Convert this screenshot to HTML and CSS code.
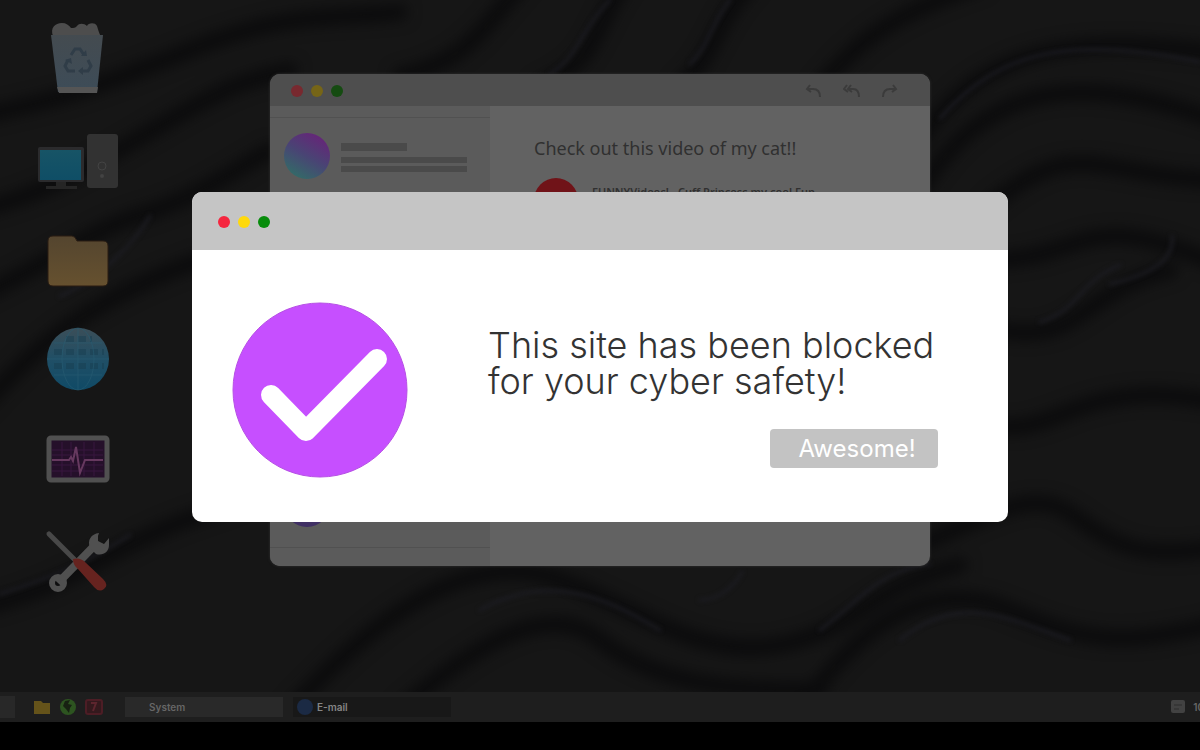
FILE: index.html
```html
<!DOCTYPE html>
<html lang="en">
<head>
  <meta charset="UTF-8">
  <meta name="viewport" content="width=device-width, initial-scale=1.0">
  <title>Site blocked</title>
  <link rel="stylesheet" href="styles.css">
</head>
<body>
  <main class="desktop">
    <svg class="wallpaper" viewBox="0 0 1200 692" preserveAspectRatio="none" aria-hidden="true">
      <defs>
        <filter id="soft" x="-5%" y="-5%" width="110%" height="110%" color-interpolation-filters="sRGB"><feGaussianBlur stdDeviation="7"/></filter>
        <filter id="thin" color-interpolation-filters="sRGB"><feGaussianBlur stdDeviation="2"/></filter>
      </defs>
      <g fill="none" stroke="#0b0b0c" stroke-width="16" stroke-linecap="round" filter="url(#soft)">
        <path d="M-30 118C60 100 90 90 190 50S330 20 400 12"/>
        <path d="M-30 212C50 195 100 160 170 120S250 80 290 70"/>
        <path d="M-30 300C40 270 90 230 140 215S220 180 270 150"/>
        <path d="M-30 420C40 340 90 300 200 260"/>
        <path d="M-30 610C70 590 110 545 200 515S270 480 300 470"/>
        <path d="M400 76C470 60 480 30 530 -25"/>
        <path d="M540 86C600 60 590 30 630 -25"/>
        <path d="M680 86C720 50 710 25 760 -25"/>
        <path d="M820 86C860 40 890 15 980 -15"/>
        <path d="M920 140C980 50 1070 30 1230 55"/>
        <path d="M920 190C990 80 1080 70 1230 125"/>
        <path d="M990 205C1080 130 1100 180 1230 180"/>
        <path d="M990 260C1090 260 1080 200 1230 270"/>
        <path d="M990 328C1080 350 1080 290 1170 270"/>
        <path d="M990 425C1060 440 1080 370 1230 405"/>
        <path d="M920 545C1020 500 1040 490 1080 520S1150 560 1230 545"/>
        <path d="M290 710C390 600 480 550 560 580S700 660 780 645S860 590 960 565"/>
        <path d="M400 710C480 640 550 600 600 640S720 692 820 690"/>
        <path d="M800 710C870 610 940 580 1010 610S1120 650 1230 620"/>
      </g>
      <g fill="none" stroke="#1c1c22" stroke-width="3" stroke-linecap="round" filter="url(#thin)">
        <path d="M60 296C90 285 130 250 150 216"/>
        <path d="M0 594C60 575 90 560 130 535"/>
        <path d="M550 74C580 55 580 30 610 0"/>
        <path d="M690 64C710 45 710 25 730 0"/>
        <path d="M940 118C1000 50 1070 35 1200 62"/>
        <path d="M1110 284C1150 275 1175 260 1172 236"/>
        <path d="M1040 322C1080 310 1080 280 1120 265"/>
        <path d="M700 600C720 600 735 585 742 572"/>
        <path d="M820 630C860 600 880 570 930 564"/>
        <path d="M480 610C550 570 610 600 660 630"/>
        <path d="M900 640C960 590 1010 620 1070 640"/>
      </g>
    </svg>

    <nav class="shortcuts" aria-label="Desktop">
      <a href="#" aria-label="Recycle bin">
        <svg viewBox="0 0 84 80">
          <defs>
            <linearGradient id="bin" x2="0" y2="1"><stop stop-color="#444b50"/><stop offset="1" stop-color="#3d4c58"/></linearGradient>
          </defs>
          <path d="M16 16c-3-8 2-13 9-13 4 0 7 2 9 5 3 0 4 0 6-2 2-3 7-3 10 0 1-3 8-4 10 0 1 3 2 7 4 11z" fill="#4d4d4d"/>
          <path d="M14 15h52l-6 57H21z" fill="url(#bin)"/>
          <path d="M20 67h41l-1 6H22z" fill="#555"/>
          <g fill="none" stroke="#303d48" stroke-width="3">
            <path d="M34 35l4-6h5l4 6M51 40l3 6-3 5h-6M38 51h-7l-3-5 3-6"/>
          </g>
          <path d="M44 36h6l-1-6zM46 47v8l-5-4zM28 40l6-2 1 6z" fill="#303d48"/>
        </svg>
      </a>
      <a href="#" aria-label="Computer">
        <svg viewBox="0 0 84 80">
          <defs><linearGradient id="screen" x2="0" y2="1"><stop stop-color="#175466"/><stop offset="1" stop-color="#0f4e66"/></linearGradient></defs>
          <rect x="50" y="14" width="31" height="54" rx="3" fill="#323232"/>
          <circle cx="65" cy="46" r="4" fill="none" stroke="#434343"/>
          <circle cx="65" cy="56" r="2" fill="#434343"/>
          <rect x="1" y="27" width="46" height="35" rx="2" fill="#2b2b2d"/>
          <rect x="3" y="30" width="41" height="30" fill="url(#screen)"/>
          <path d="M19 62h10v4h11v3H9v-3h10z" fill="#252525"/>
        </svg>
      </a>
      <a href="#" aria-label="Files">
        <svg viewBox="0 0 84 80">
          <defs><linearGradient id="folder" x2="0" y2="1"><stop stop-color="#54452f"/><stop offset="1" stop-color="#66512f"/></linearGradient></defs>
          <path d="M11 21q0-5 5-5h19q3 0 5 5h26q5 0 5 5v35q0 5-5 5H16q-5 0-5-5z" fill="url(#folder)" stroke="#2a1d13"/>
        </svg>
      </a>
      <a href="#" aria-label="Browser">
        <svg viewBox="0 0 84 80">
          <defs><linearGradient id="globe" x2="0" y2="1"><stop stop-color="#3b4e58"/><stop offset=".5" stop-color="#204f66"/><stop offset="1" stop-color="#104a66"/></linearGradient></defs>
          <circle cx="41" cy="39" r="31" fill="url(#globe)"/>
          <g fill="none" stroke="#173e50" stroke-width="6" stroke-dasharray="8 4">
            <path d="M29 19h26M17 32h50M17 46h50" opacity=".5"/>
          </g>
          <g fill="none" stroke="#285d73" stroke-width="1" opacity=".6">
            <path d="M41 8v62M10 39h62M17 23h48M17 55h48"/>
            <ellipse cx="41" cy="39" rx="16" ry="31"/>
          </g>
        </svg>
      </a>
      <a href="#" aria-label="System monitor">
        <svg viewBox="0 0 84 80">
          <rect x="12" y="18" width="58" height="42" rx="2" fill="#25102a" stroke="#505050" stroke-width="5"/>
          <path d="M15 30h51M15 35h51M15 45h51M15 51h51M25 22v34M34 22v34M47 22v34M57 22v34" stroke="#39173e"/>
          <path d="M15 40h17l2-3 2 4 3-14 4 26 5-13h18" fill="none" stroke="#66395f" stroke-width="2"/>
        </svg>
      </a>
      <a href="#" aria-label="Tools">
        <svg viewBox="0 0 84 80">
          <path d="M21 63L61 22" stroke="#505050" stroke-width="8"/>
          <circle cx="21" cy="63" r="6" fill="none" stroke="#505050" stroke-width="6"/>
          <path d="M62 13c-8 1-12 7-9 15l6 6c7 2 13-2 13-9v-7l-5 6-6-3v-5z" fill="#505050"/>
          <path d="M12 14l26 26" stroke="#484848" stroke-width="5" stroke-linecap="round"/>
          <path d="M36 39q7-2 12 3l18 17q6 6 1 10-5 4-10-2L41 49q-5-4-5-10z" fill="#66231f"/>
        </svg>
      </a>
    </nav>

    <section class="window mail" aria-label="E-mail">
      <header class="mail-bar">
        <span class="lights"><i class="red"></i><i class="yellow"></i><i class="green"></i></span>
        <span class="mail-tools">
          <button aria-label="Reply"><svg viewBox="0 0 18 14"><path d="M5 1L2 5l4 3M2 5h6q7 0 7 8"/></svg></button>
          <button aria-label="Reply all"><svg viewBox="0 0 18 14"><path d="M4 1L1 5l4 3M8 1L5 5l4 3M5 5h5q6 0 6 8"/></svg></button>
          <button aria-label="Forward"><svg viewBox="0 0 18 14"><path d="M12 1l3 4-4 3M15 5H9q-7 0-7 8"/></svg></button>
        </span>
      </header>
      <div class="mail-body">
        <aside class="inbox">
          <div class="inbox-row">
            <span class="avatar"></span>
            <span class="lines"><i class="short"></i><i></i><i></i></span>
          </div>
          <div class="inbox-row last"><span class="avatar"></span></div>
        </aside>
        <article class="message">
          <h2>Check out this video of my cat!!</h2>
          <div class="sender">
            <span class="sender-photo"></span>
            <p>FUNNYVideos! - Cuff Princess my cool Fun</p>
          </div>
        </article>
      </div>
    </section>

    <section class="window dialog" role="dialog" aria-labelledby="blocked">
      <header class="dialog-bar">
        <span class="lights bright"><i class="red"></i><i class="yellow"></i><i class="green"></i></span>
      </header>
      <div class="dialog-body">
        <svg class="check" viewBox="0 0 176 176" aria-hidden="true">
          <circle cx="88" cy="88" r="87" fill="#c64fff" stroke="#b650e5"/>
          <path d="M39 93l35 36 71-72" fill="none" stroke="#fff" stroke-width="20" stroke-linecap="round" stroke-linejoin="round"/>
        </svg>
        <div class="notice">
          <h1 id="blocked">This site has been blocked<br>for your cyber safety!</h1>
          <button class="confirm">Awesome!</button>
        </div>
      </div>
    </section>
  </main>

  <footer class="taskbar">
    <button class="menu" aria-label="Menu"></button>
    <div class="launchers">
      <button aria-label="Files"><svg viewBox="0 0 18 18"><path d="M1 3h7l2 2h7v11H1z" fill="#65531a"/></svg></button>
      <button aria-label="Web"><svg viewBox="0 0 18 18"><circle cx="9" cy="9" r="8" fill="#2d5420"/><path d="M6 3l5-1-2 4 4 1-2 3-1 5-3-4-3-3z" fill="#172112"/></svg></button>
      <button aria-label="Terminal"><svg viewBox="0 0 18 18"><rect x="1" y="2" width="16" height="14" rx="2" fill="#34191d" stroke="#4d1d25" stroke-width="2"/><path d="M6 5h5l-3 8" fill="none" stroke="#5d252e" stroke-width="2"/></svg></button>
    </div>
    <button class="task">System</button>
    <button class="task current"><span class="task-icon"></span>E-mail</button>
    <div class="tray">
      <svg viewBox="0 0 14 14" aria-hidden="true"><rect width="14" height="13" rx="2" fill="#424242"/><path d="M3 5h8M3 9h5" stroke="#2c2c2c"/></svg>
      <time>10</time>
    </div>
  </footer>
</body>
</html>
```
FILE: styles.css
```css
* {
  box-sizing: border-box;
}
body {
  margin: 0;
  min-height: 100vh;
  padding-bottom: 28px;
  display: flex;
  flex-direction: column;
  background: #000;
  font-family: Inter, "Liberation Sans", sans-serif;
  overflow: hidden;
}
h1, h2, p {
  margin: 0;
  font-weight: 400;
}
button {
  border: 0;
  padding: 0;
  background: none;
  font-family: inherit;
  color: inherit;
  cursor: pointer;
}
svg {
  display: block;
}
.desktop {
  position: relative;
  flex: 1;
  background: #161616;
  overflow: hidden;
}
.wallpaper {
  position: absolute;
  inset: 0;
  width: 100%;
  height: 100%;
}
.shortcuts {
  position: relative;
  display: flex;
  flex-direction: column;
  gap: 20px;
  width: 84px;
  margin-left: 37px;
  padding-top: 20px;
}
.shortcuts svg {
  width: 84px;
  height: 80px;
}

/* windows */
.window {
  position: absolute;
  display: flex;
  flex-direction: column;
  overflow: hidden;
  border-radius: 10px;
}
.lights {
  display: flex;
  gap: 8px;
}
.lights i {
  width: 12px;
  height: 12px;
  border-radius: 50%;
}
.red { background: #78292f; }
.yellow { background: #766517; }
.green { background: #154b11; }
.bright .red { background: #f5263f; }
.bright .yellow { background: #ffd90b; }
.bright .green { background: #078c0b; }

.mail {
  top: 74px;
  left: 22.5%;
  width: 55%;
  height: 492px;
  background: #626262;
  box-shadow: 0 0 3px #333;
}
.mail-bar {
  display: flex;
  align-items: center;
  justify-content: space-between;
  height: 32px;
  padding: 2px 31px 0 21px;
  background: #4e4e4e;
}
.mail-tools {
  display: flex;
  gap: 20px;
}
.mail-tools svg {
  width: 18px;
  height: 14px;
  fill: none;
  stroke: #3b3b3b;
  stroke-width: 2;
}
.mail-body {
  flex: 1;
  display: flex;
}
.inbox {
  display: flex;
  flex-direction: column;
  justify-content: space-between;
  width: 220px;
  margin: 11px 0 18px;
  border-top: 1px solid #515151;
  border-bottom: 1px solid #515151;
  background: #5b5b5b;
  box-shadow: 0 -11px #5b5b5b, 0 18px #5b5b5b;
}
.inbox-row {
  display: flex;
  gap: 11px;
  padding: 15px 14px;
}
.inbox-row.last {
  padding-bottom: 20px;
}
.avatar {
  width: 46px;
  height: 46px;
  border-radius: 50%;
  background: linear-gradient(210deg, #632878 15%, #494474 50%, #326c67 90%);
}
.last .avatar {
  background: #403064;
}
.lines {
  display: flex;
  flex-direction: column;
  gap: 3px;
  padding-top: 10px;
}
.lines i {
  width: 126px;
  height: 6px;
  background: #4a4a4a;
}
.lines .short {
  width: 66px;
  height: 8px;
  margin-bottom: 3px;
}
.message {
  flex: 1;
  padding: 28px 44px;
  color: #303030;
  font-family: "Noto Sans", "Open Sans", sans-serif;
}
.message h2 {
  font-size: 18px;
  line-height: 28px;
  white-space: nowrap;
}
.sender {
  display: flex;
  gap: 14px;
  padding-top: 16px;
}
.sender-photo {
  width: 44px;
  height: 44px;
  border-radius: 50%;
  background: #701318;
}
.sender p {
  padding-top: 6px;
  font-size: 11px;
  font-weight: 600;
  line-height: 16px;
  white-space: nowrap;
}

.dialog {
  top: 192px;
  left: 16%;
  width: 68%;
  background: #fff;
}
.dialog-bar {
  display: flex;
  align-items: center;
  height: 58px;
  padding: 2px 26px 0;
  background: #c5c5c5;
}
.dialog-body {
  display: flex;
  gap: 80px;
  padding: 52px 70px 44px 40px;
}
.check {
  flex: none;
  width: 176px;
  height: 176px;
}
.notice {
  flex: 1;
  display: flex;
  flex-direction: column;
  align-items: flex-end;
  padding-top: 25px;
}
.notice h1 {
  align-self: flex-start;
  color: #333;
  font-size: 36px;
  font-weight: 300;
  line-height: 36px;
  white-space: nowrap;
}
.confirm {
  width: 168px;
  height: 39px;
  margin-top: 30px;
  padding-left: 6px;
  border-radius: 4px;
  background: #c3c3c3;
  color: #fff;
  font-size: 24px;
}

/* taskbar */
.taskbar {
  display: flex;
  align-items: center;
  height: 30px;
  background: #1e1e1e;
  color: #666;
  font-size: 10px;
  font-weight: 600;
  overflow: hidden;
}
.menu {
  width: 15px;
  height: 22px;
  background: #282828;
}
.launchers {
  display: flex;
  gap: 8px;
  padding: 0 22px 0 18px;
}
.launchers svg {
  width: 18px;
  height: 18px;
}
.task {
  display: flex;
  align-items: center;
  gap: 4px;
  width: 158px;
  height: 20px;
  margin-right: 10px;
  padding-left: 24px;
  background: #292929;
  font-size: 10px;
  font-weight: 600;
}
.task.current {
  padding-left: 4px;
  background: #181818;
  color: #858585;
}
.task-icon {
  width: 16px;
  height: 16px;
  border-radius: 50%;
  background: #1b2a44;
}
.tray {
  display: flex;
  align-items: center;
  gap: 8px;
  margin-left: auto;
  margin-right: -4px;
}
.tray svg {
  width: 14px;
  height: 14px;
}
```
